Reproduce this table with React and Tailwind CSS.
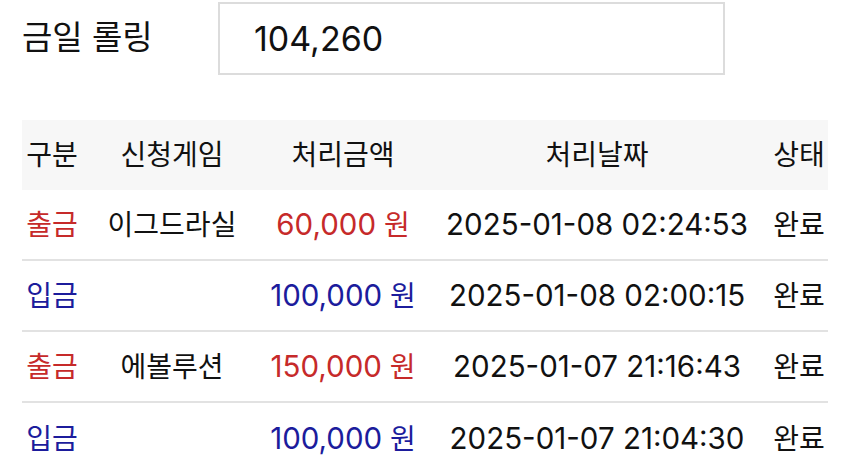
import React from "react";

const rows = [
  { type: "출금", game: "이그드라실", amount: "60,000", date: "2025-01-08 02:24:53", status: "완료", out: true },
  { type: "입금", game: "", amount: "100,000", date: "2025-01-08 02:00:15", status: "완료", out: false },
  { type: "출금", game: "에볼루션", amount: "150,000", date: "2025-01-07 21:16:43", status: "완료", out: true },
  { type: "입금", game: "", amount: "100,000", date: "2025-01-07 21:04:30", status: "완료", out: false },
];

export default function App() {
  return (
    <div className="w-[850px] h-[468px] overflow-hidden bg-white text-[#111] font-['Inter','Noto_Sans_CJK_KR',sans-serif]">
      <div className="flex items-center pt-[2px] pl-[22px] h-[75px]">
        <div className="w-[196px] text-[33px] leading-none -mt-[2px]">금일 롤링</div>
        <div className="w-[507px] h-[73px] border-2 border-[#dcdcdc] flex items-center pl-[34px] text-[34px]">104,260</div>
      </div>
      <div className="mt-[45px] mx-[22px] w-[806px] text-[28px]">
        <div className="grid grid-cols-[60px_180px_162px_346px_58px] h-[70px] items-center bg-[#f7f7f7] text-center">
          <div>구분</div>
          <div>신청게임</div>
          <div>처리금액</div>
          <div>처리날짜</div>
          <div>상태</div>
        </div>
        {rows.map((r, i) => (
          <div
            key={i}
            className={`grid grid-cols-[60px_180px_162px_346px_58px] h-[71px] items-center text-center ${i < rows.length - 1 ? "border-b-2 border-[#e2e2e2]" : ""}`}
          >
            <div className={r.out ? "text-[#c62a2a]" : "text-[#1c1c9c]"}>{r.type}</div>
            <div>{r.game}</div>
            <div className={`whitespace-nowrap ${r.out ? "text-[#c62a2a]" : "text-[#1c1c9c]"}`}>
              <span className="text-[29.5px]">{r.amount}</span> 원
            </div>
            <div className="text-[29.5px] whitespace-nowrap">{r.date}</div>
            <div>{r.status}</div>
          </div>
        ))}
      </div>
    </div>
  );
}
